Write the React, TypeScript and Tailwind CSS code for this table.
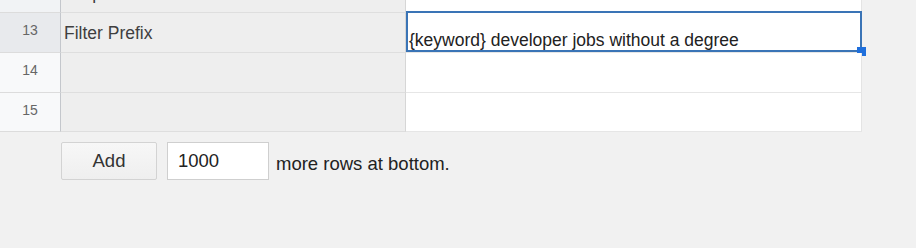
import React from "react";

type Row = {
  num: number;
  label: string;
  value: string;
  selected?: boolean;
  headerBg: string;
  height: string;
};

const rows: Row[] = [
  { num: 12, label: "Output", value: "", headerBg: "bg-[#f1f3f5]", height: "h-[40px]" },
  { num: 13, label: "Filter Prefix", value: "{keyword} developer jobs without a degree", selected: true, headerBg: "bg-[#e8eaed]", height: "h-[40px]" },
  { num: 14, label: "", value: "", headerBg: "bg-[#f8f9fa]", height: "h-[40px]" },
  { num: 15, label: "", value: "", headerBg: "bg-[#f8f9fa]", height: "h-[39px]" },
];

function SheetRow({ row }: { row: Row }) {
  return (
    <div className={`flex ${row.height}`}>
      <div
        className={`w-[61px] shrink-0 ${row.headerBg} border-r border-r-[#c4c7cc] border-b border-b-[#dcdcdc] flex items-center justify-center pb-[4px] text-[14px] text-[#666666]`}
      >
        {row.num}
      </div>
      <div className="w-[345px] shrink-0 bg-[#eeeeee] border-r border-r-[#d6d6d6] border-b border-b-[#dedede] pl-[3px] pt-[10px] text-[17.5px] leading-[20px] text-[#3f3f3f] whitespace-nowrap overflow-hidden">
        {row.label}
      </div>
      <div className="relative w-[456px] shrink-0 bg-white border-r border-r-[#e4e4e4] border-b border-b-[#e6e6e6] flex items-end pl-[3px] pb-[2px] text-[17.5px] leading-[20px] text-[#222222] whitespace-nowrap">
        {row.value}
        {row.selected && (
          <>
            <div className="absolute left-0 right-[-1px] top-[-2px] bottom-0 border-2 border-[#3a74b6] pointer-events-none" />
            <div className="absolute right-[-5px] bottom-[-4px] w-[9px] h-[9px] bg-[#1f6fdc]" />
          </>
        )}
      </div>
    </div>
  );
}

export default function App() {
  return (
    <div className="w-[916px] h-[248px] overflow-hidden bg-[#f1f1f1] font-['Liberation_Sans',Arial,sans-serif]">
      <div className="flex flex-col -mt-[27px]">
        {rows.map((r) => (
          <SheetRow key={r.num} row={r} />
        ))}
      </div>
      <div className="flex items-center mt-[10px] pl-[61px] h-[38px]">
        <button className="w-[96px] h-[38px] rounded-[2px] border border-[#d3d3d3] bg-gradient-to-b from-[#f7f7f7] to-[#efefef] text-[18.5px] text-[#333333] leading-[36px]">
          Add
        </button>
        <div className="ml-[10px] w-[102px] h-[38px] border border-[#cfcfcf] bg-white pl-[10px] flex items-center text-[18.5px] text-[#222222]">
          1000
        </div>
        <span className="ml-[7px] pt-[5px] text-[18.5px] text-[#222222]">more rows at bottom.</span>
      </div>
    </div>
  );
}
